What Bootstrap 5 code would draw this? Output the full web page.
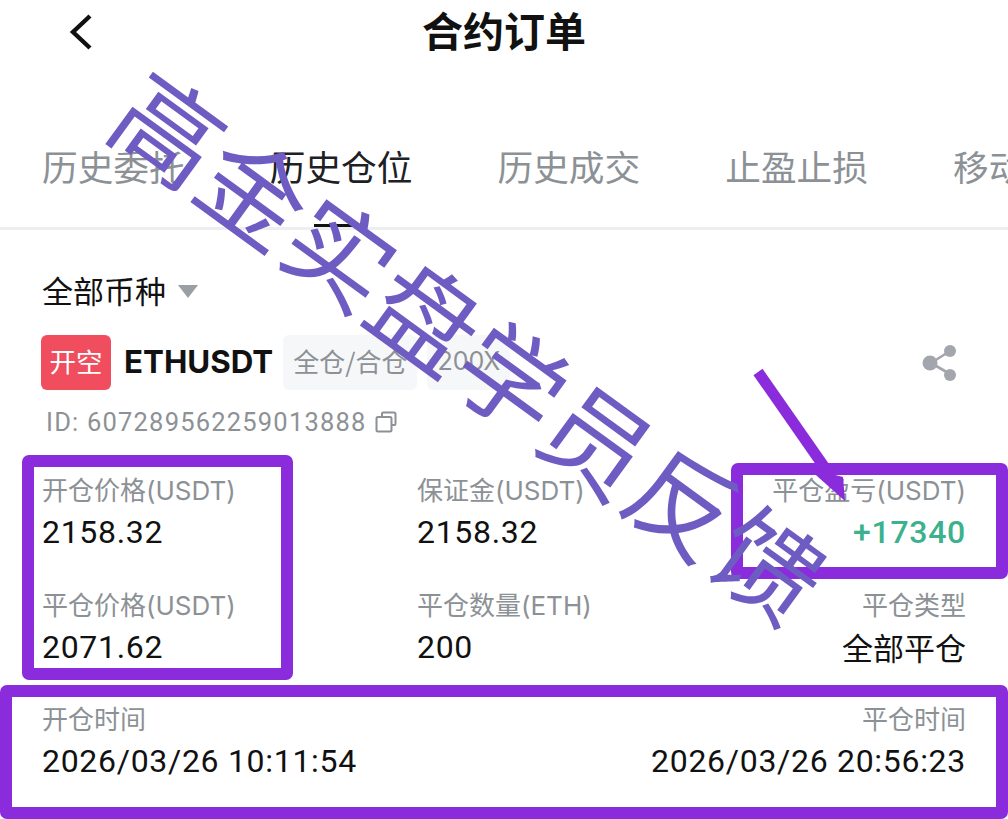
<!DOCTYPE html>
<html lang="zh-CN">
<head>
<meta charset="utf-8">
<title>合约订单</title>
<link rel="stylesheet" href="https://cdn.jsdelivr.net/npm/bootstrap@5.3.0/dist/css/bootstrap.min.css">
<style>
html,body{margin:0;background:#fff}
.screen{width:1008px;height:819px;overflow:hidden;position:relative;background:#fff;font-family:Inter,"Noto Sans CJK SC",sans-serif;color:#111}
.topbar{height:60px;position:relative}
.topbar h1{font-size:41px;font-weight:700;line-height:58px;margin:0;text-align:center;font-family:"Noto Sans CJK SC",sans-serif;color:#111}
.back{position:absolute;left:68px;top:13px}
.tabs{margin-top:73px;padding-left:42px;gap:85px;height:97px;border-bottom:3px solid #eceeef;white-space:nowrap;overflow:hidden}
.tabx{font-size:35.7px;line-height:66px;color:#8c9196;font-family:"Noto Sans CJK SC",sans-serif;position:relative;flex:none}
.tabx.on{color:#1d2024}
.tabx.on::after{content:"";position:absolute;left:44px;width:43px;top:91px;height:3px;background:#111}
.sheet{padding:0 42px}
.coin{font-size:31px;line-height:40px;margin-top:40px;font-family:"Noto Sans CJK SC",sans-serif}
.tri{width:0;height:0;border-left:10px solid transparent;border-right:10px solid transparent;border-top:13px solid #9a9ea5;margin-left:12px;margin-top:2px}
.inst{margin-top:25px;height:55px;margin-left:-1px}
.sidebadge{width:70px;height:55px;border-radius:6px;background:#f04e5e;color:#fff;font-size:26.5px;line-height:52px;text-align:center;font-family:"Noto Sans CJK SC",sans-serif}
.sym{font-size:31.3px;font-weight:700;margin-left:13px;margin-right:10px;line-height:55px;color:#111}
.chip{height:55px;line-height:52px;padding:0 10px;margin-right:10px;background:#f6f7f9;border-radius:6px;color:#8c9196;font-size:26px;font-family:"Noto Sans CJK SC",sans-serif;white-space:nowrap}
.chip.lev{font-family:Inter,sans-serif;font-size:25px;padding:0 10px}
.share{margin-left:auto;margin-right:8px}
.oid{font-family:Roboto,sans-serif;font-size:25.5px;line-height:36px;color:#8c9196;margin-top:14px;margin-left:4px;letter-spacing:1.2px}
.dgrid{margin-top:33px;display:grid;grid-template-columns:375px 1fr 1fr;grid-auto-rows:115px}
.cell .lb,.tline .lb{font-size:26px;line-height:36px;color:#8c9196;font-family:Inter,"Noto Sans CJK SC",sans-serif;white-space:nowrap}
.cell .vl,.tline .vl{font-family:Roboto,sans-serif;font-size:32px;line-height:46px;color:#111;letter-spacing:.7px;white-space:nowrap}
.cell .vl.cjk{font-family:"Noto Sans CJK SC",sans-serif;letter-spacing:0;font-size:31px}
.cell .vl.gain{color:#3db08e;font-weight:500}
.tline{margin-top:-1px}
.watermark{position:absolute;left:129px;top:41px;font-family:"Noto Sans CJK SC",sans-serif;font-weight:400;font-size:106px;line-height:106px;color:#6f5cc2;transform:rotate(36deg);transform-origin:0 50%;white-space:nowrap}
.frame{position:absolute;border:12px solid #8a2bdc;border-radius:7px;pointer-events:none}
.fa{left:22px;top:455px;width:271px;height:225px}
.fb{left:731px;top:463px;width:277px;height:116px}
.fc{left:0;top:685px;width:1008px;height:134px}
.arrow{position:absolute;left:0;top:0;pointer-events:none}
</style>
</head>
<body>
<div class="screen">
  <div class="topbar">
    <svg class="back" width="26" height="38" viewBox="0 0 26 38" aria-hidden="true"><path d="M22 3 5 19l17 16" fill="none" stroke="#111" stroke-width="4.4"/></svg>
    <h1>合约订单</h1>
  </div>
  <div class="tabs d-flex">
    <div class="tabx">历史委托</div>
    <div class="tabx on">历史仓位</div>
    <div class="tabx">历史成交</div>
    <div class="tabx">止盈止损</div>
    <div class="tabx">移动止盈止损</div>
  </div>
  <div class="sheet">
    <div class="coin d-flex align-items-center">全部币种<span class="tri"></span></div>
    <div class="inst d-flex align-items-center">
      <div class="sidebadge">开空</div>
      <div class="sym">ETHUSDT</div>
      <div class="chip">全仓/合仓</div>
      <div class="chip lev">200X</div>
      <svg class="share" width="36" height="38" viewBox="0 0 36 38" aria-hidden="true"><path d="M9 19 28 7M9 19l19 11" stroke="#a3a6ad" stroke-width="2.6" fill="none"/><circle cx="8" cy="19" r="7.5" fill="#a3a6ad"/><circle cx="28" cy="7" r="6" fill="#a3a6ad"/><circle cx="28" cy="31" r="6" fill="#a3a6ad"/></svg>
    </div>
    <div class="oid d-flex align-items-center">ID: 607289562259013888
      <svg class="ms-2" width="22" height="22" viewBox="0 0 22 22" aria-hidden="true"><path d="M7 5V2.5A1 1 0 0 1 8 1.5h11A1.5 1.5 0 0 1 20.500 3v10a1 1 0 0 1-1 1H17" fill="none" stroke="#8c9196" stroke-width="2"/><rect x="1.500" y="6" width="15" height="14.500" rx="1.500" fill="none" stroke="#8c9196" stroke-width="2"/></svg>
    </div>
    <div class="dgrid">
      <div class="cell"><div class="lb">开仓价格(USDT)</div><div class="vl">2158.32</div></div>
      <div class="cell"><div class="lb">保证金(USDT)</div><div class="vl">2158.32</div></div>
      <div class="cell text-end"><div class="lb">平仓盈亏(USDT)</div><div class="vl gain">+17340</div></div>
      <div class="cell"><div class="lb">平仓价格(USDT)</div><div class="vl">2071.62</div></div>
      <div class="cell"><div class="lb">平仓数量(ETH)</div><div class="vl">200</div></div>
      <div class="cell text-end"><div class="lb">平仓类型</div><div class="vl cjk">全部平仓</div></div>
    </div>
    <div class="tline d-flex justify-content-between">
      <div><div class="lb">开仓时间</div><div class="vl">2026/03/26 10:11:54</div></div>
      <div class="text-end"><div class="lb">平仓时间</div><div class="vl">2026/03/26 20:56:23</div></div>
    </div>
  </div>
  <div class="frame fa"></div>
  <div class="frame fb"></div>
  <div class="frame fc"></div>
  <div class="watermark">高金实盘学员反馈</div>
  <svg class="arrow" width="1008" height="819" aria-hidden="true"><path d="M758 372 825 468" stroke="#8a2bdc" stroke-width="11" fill="none"/><path d="M845 501 843 477 808 468Z" fill="#8a2bdc"/></svg>
</div>
</body>
</html>
